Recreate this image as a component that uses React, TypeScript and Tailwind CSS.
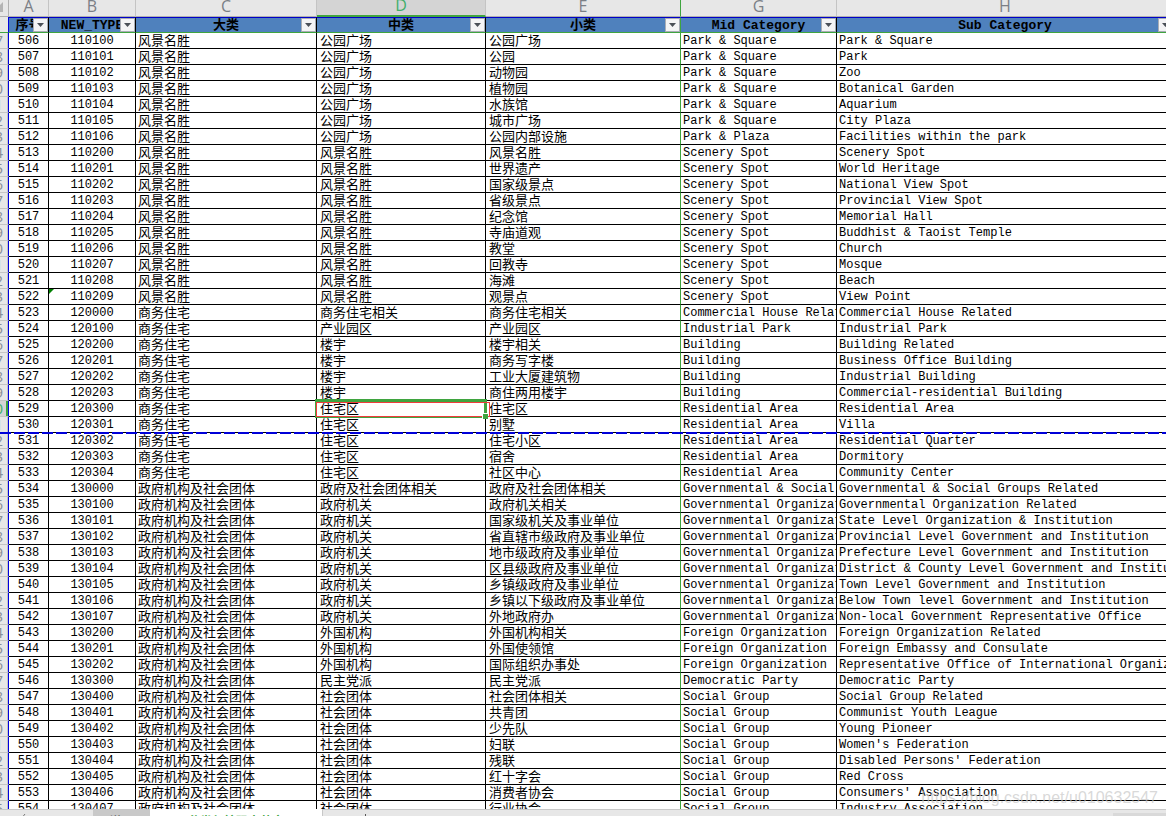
import clsx from 'clsx';

type Row = [no: number, type: number, big: string, mid: string, sub: string, midEn: string, subEn: string];

const SCENERY = '风景名胜';
const HOUSE = '商务住宅';
const GOV = '政府机构及社会团体';

const ROWS: Row[] = [
  [506, 110100, SCENERY, '公园广场', '公园广场', 'Park & Square', 'Park & Square'],
  [507, 110101, SCENERY, '公园广场', '公园', 'Park & Square', 'Park'],
  [508, 110102, SCENERY, '公园广场', '动物园', 'Park & Square', 'Zoo'],
  [509, 110103, SCENERY, '公园广场', '植物园', 'Park & Square', 'Botanical Garden'],
  [510, 110104, SCENERY, '公园广场', '水族馆', 'Park & Square', 'Aquarium'],
  [511, 110105, SCENERY, '公园广场', '城市广场', 'Park & Square', 'City Plaza'],
  [512, 110106, SCENERY, '公园广场', '公园内部设施', 'Park & Plaza', 'Facilities within the park'],
  [513, 110200, SCENERY, '风景名胜', '风景名胜', 'Scenery Spot', 'Scenery Spot'],
  [514, 110201, SCENERY, '风景名胜', '世界遗产', 'Scenery Spot', 'World Heritage'],
  [515, 110202, SCENERY, '风景名胜', '国家级景点', 'Scenery Spot', 'National View Spot'],
  [516, 110203, SCENERY, '风景名胜', '省级景点', 'Scenery Spot', 'Provincial View Spot'],
  [517, 110204, SCENERY, '风景名胜', '纪念馆', 'Scenery Spot', 'Memorial Hall'],
  [518, 110205, SCENERY, '风景名胜', '寺庙道观', 'Scenery Spot', 'Buddhist & Taoist Temple'],
  [519, 110206, SCENERY, '风景名胜', '教堂', 'Scenery Spot', 'Church'],
  [520, 110207, SCENERY, '风景名胜', '回教寺', 'Scenery Spot', 'Mosque'],
  [521, 110208, SCENERY, '风景名胜', '海滩', 'Scenery Spot', 'Beach'],
  [522, 110209, SCENERY, '风景名胜', '观景点', 'Scenery Spot', 'View Point'],
  [523, 120000, HOUSE, '商务住宅相关', '商务住宅相关', 'Commercial House Related', 'Commercial House Related'],
  [524, 120100, HOUSE, '产业园区', '产业园区', 'Industrial Park', 'Industrial Park'],
  [525, 120200, HOUSE, '楼宇', '楼宇相关', 'Building', 'Building Related'],
  [526, 120201, HOUSE, '楼宇', '商务写字楼', 'Building', 'Business Office Building'],
  [527, 120202, HOUSE, '楼宇', '工业大厦建筑物', 'Building', 'Industrial Building'],
  [528, 120203, HOUSE, '楼宇', '商住两用楼宇', 'Building', 'Commercial-residential Building'],
  [529, 120300, HOUSE, '住宅区', '住宅区', 'Residential Area', 'Residential Area'],
  [530, 120301, HOUSE, '住宅区', '别墅', 'Residential Area', 'Villa'],
  [531, 120302, HOUSE, '住宅区', '住宅小区', 'Residential Area', 'Residential Quarter'],
  [532, 120303, HOUSE, '住宅区', '宿舍', 'Residential Area', 'Dormitory'],
  [533, 120304, HOUSE, '住宅区', '社区中心', 'Residential Area', 'Community Center'],
  [534, 130000, GOV, '政府及社会团体相关', '政府及社会团体相关', 'Governmental & Social Groups', 'Governmental & Social Groups Related'],
  [535, 130100, GOV, '政府机关', '政府机关相关', 'Governmental Organization', 'Governmental Organization Related'],
  [536, 130101, GOV, '政府机关', '国家级机关及事业单位', 'Governmental Organization', 'State Level Organization & Institution'],
  [537, 130102, GOV, '政府机关', '省直辖市级政府及事业单位', 'Governmental Organization', 'Provincial Level Government and Institution'],
  [538, 130103, GOV, '政府机关', '地市级政府及事业单位', 'Governmental Organization', 'Prefecture Level Government and Institution'],
  [539, 130104, GOV, '政府机关', '区县级政府及事业单位', 'Governmental Organization', 'District & County Level Government and Institution'],
  [540, 130105, GOV, '政府机关', '乡镇级政府及事业单位', 'Governmental Organization', 'Town Level Government and Institution'],
  [541, 130106, GOV, '政府机关', '乡镇以下级政府及事业单位', 'Governmental Organization', 'Below Town level Government and Institution'],
  [542, 130107, GOV, '政府机关', '外地政府办', 'Governmental Organization', 'Non-local Government Representative Office'],
  [543, 130200, GOV, '外国机构', '外国机构相关', 'Foreign Organization', 'Foreign Organization Related'],
  [544, 130201, GOV, '外国机构', '外国使领馆', 'Foreign Organization', 'Foreign Embassy and Consulate'],
  [545, 130202, GOV, '外国机构', '国际组织办事处', 'Foreign Organization', 'Representative Office of International Organization'],
  [546, 130300, GOV, '民主党派', '民主党派', 'Democratic Party', 'Democratic Party'],
  [547, 130400, GOV, '社会团体', '社会团体相关', 'Social Group', 'Social Group Related'],
  [548, 130401, GOV, '社会团体', '共青团', 'Social Group', 'Communist Youth League'],
  [549, 130402, GOV, '社会团体', '少先队', 'Social Group', 'Young Pioneer'],
  [550, 130403, GOV, '社会团体', '妇联', 'Social Group', "Women's Federation"],
  [551, 130404, GOV, '社会团体', '残联', 'Social Group', "Disabled Persons' Federation"],
  [552, 130405, GOV, '社会团体', '红十字会', 'Social Group', 'Red Cross'],
  [553, 130406, GOV, '社会团体', '消费者协会', 'Social Group', "Consumers' Association"],
  [554, 130407, GOV, '社会团体', '行业协会', 'Social Group', 'Industry Association'],
];

const COLUMNS = [
  { letter: 'A', title: '序号', width: 'w-[40px]' },
  { letter: 'B', title: 'NEW_TYPE', width: 'w-[87px]' },
  { letter: 'C', title: '大类', width: 'w-[181px]' },
  { letter: 'D', title: '中类', width: 'w-[169px]' },
  { letter: 'E', title: '小类', width: 'w-[195px]' },
  { letter: 'G', title: 'Mid Category', width: 'w-[156px]' },
  { letter: 'H', title: 'Sub Category', width: '' },
];

const SELECTED_ROW = 529;
const PAGE_BREAK_ROW = 530;
const FLAGGED_ROW = 522;

const HEADING = "font-['Liberation_Mono','Noto_Sans_CJK_SC',monospace] text-[13px]";
const CJK = "font-['Liberation_Mono','Noto_Sans_CJK_SC',monospace] text-[13px]";
const LATIN = "font-['Liberation_Mono',monospace] text-[12px]";
const CELL = 'h-4 overflow-hidden border-r border-b p-0 pt-[2px] leading-[13px] whitespace-nowrap';

export default function App() {
  return (
    <div className="flex h-screen flex-col overflow-hidden bg-white text-black">
      <main className="min-h-0 flex-1 overflow-hidden">
        <table className="w-full min-w-[1174px] table-fixed border-separate border-spacing-0">
          <colgroup>
            <col className="w-[9px]" />
            {COLUMNS.map((column) => (
              <col key={column.letter} className={column.width} />
            ))}
          </colgroup>
          <thead>
            <LetterRow />
            <FilterRow />
          </thead>
          <tbody>
            {ROWS.map((row) => (
              <SheetRow key={row[0]} row={row} />
            ))}
          </tbody>
        </table>
      </main>
      <SheetTabs />
      <div
        aria-hidden
        className="pointer-events-none absolute right-2 bottom-2 font-['Liberation_Sans',sans-serif] text-[16px] leading-5 text-[#c8c8c8]/70"
      >
        https://blog.csdn.net/u010632547
      </div>
    </div>
  );
}

function LetterRow() {
  return (
    <tr className="bg-[#e7e7e7] font-['Open_Sans',sans-serif] text-[16px] text-[#7b7f86]">
      <th className="h-[17px] overflow-hidden border-r border-b border-[#b0b0b0] p-0">
        <svg viewBox="0 0 8 16" className="block h-4 w-2" aria-hidden>
          <path d="M3 2v10H0V5z" fill="#b4b4b4" />
        </svg>
      </th>
      {COLUMNS.map(({ letter }) => (
        <th
          key={letter}
          scope="col"
          className={clsx(
            'h-[17px] border-r p-0 font-normal',
            letter === 'D'
              ? 'border-b-2 border-b-[#3fa43f] bg-[#d4d4d4] text-[#3fae6a]'
              : 'border-b border-b-[#b0b0b0]',
            letter === 'E' ? 'border-r-[#3fa43f]' : 'border-r-[#c4c4c4]',
          )}
        >
          <div className="flex h-[15px] items-start justify-center leading-[10px]">{letter}</div>
        </th>
      ))}
    </tr>
  );
}

function FilterRow() {
  return (
    <tr>
      <th className="h-4 border-r border-b border-r-[#0000e0] border-b-[#3fa43f] bg-[#e7e7e7] p-0" />
      {COLUMNS.map(({ letter, title }) => (
        <th
          key={letter}
          scope="col"
          className={clsx(
            'h-4 overflow-hidden border-t border-r border-b border-t-[#0000c8] border-b-[#3fa43f] bg-[#4f81bd] p-0',
            letter === 'E' ? 'border-r-[#3fa43f]' : 'border-r-black',
          )}
        >
          <div className="relative flex h-[14px] items-end justify-center">
            <span className={clsx('leading-[13px] font-bold whitespace-nowrap', HEADING)}>{title}</span>
            <button
              type="button"
              aria-label={`Filter ${title}`}
              className="absolute top-0 right-0 flex h-[14px] w-[15px] items-center justify-center border border-[#a9adb5] bg-[#f3f3f5]"
            >
              <svg viewBox="0 0 7 4" className="h-1 w-[7px]" aria-hidden>
                <path d="M0 0h7L3.5 4z" fill="#4a4f57" />
              </svg>
            </button>
          </div>
        </th>
      ))}
    </tr>
  );
}

function SheetRow({ row }: { row: Row }) {
  const [no, type, big, mid, sub, midEn, subEn] = row;
  const selected = no === SELECTED_ROW;

  return (
    <tr>
      <th
        scope="row"
        className={clsx(
          'relative h-4 border-r border-b border-r-[#0000e0] border-b-[#c4c4c4] p-0 font-normal',
          selected ? 'bg-[#d4d4d4] text-[#3fae6a]' : 'bg-[#e7e7e7] text-[#8a8e95]',
        )}
      >
        <div
          className={clsx(
            "flex h-[15px] w-2 justify-end overflow-hidden font-['Open_Sans',sans-serif] text-[15px] leading-[15px]",
            selected ? 'border-r-2 border-[#3fa43f] pr-[3px]' : 'border-r border-[#c4c4c4] pr-1',
          )}
        >
          {(no + 1) % 10}
        </div>
        {no === PAGE_BREAK_ROW && <PageBreak />}
      </th>
      <td className={clsx(CELL, LATIN, 'border-black text-center')}>{no}</td>
      <td className={clsx(CELL, LATIN, 'relative border-black text-center')}>
        {no === FLAGGED_ROW && (
          <svg viewBox="0 0 5 5" className="absolute top-0 left-0 h-[5px] w-[5px]" aria-hidden>
            <path d="M0 0h5L0 5z" fill="#008000" />
          </svg>
        )}
        {type}
      </td>
      <td className={clsx(CELL, CJK, 'border-black pl-[2px]')}>{big}</td>
      {selected ? (
        <td className={clsx(CJK, 'relative h-4 border-r border-b border-black p-0 pt-[2px] pl-[3px] leading-[13px]')}>
          {mid}
          <Selection />
        </td>
      ) : (
        <td className={clsx(CELL, CJK, 'border-black pl-[3px]')}>{mid}</td>
      )}
      <td className={clsx(CELL, CJK, 'border-r-[#3fa43f] border-b-black pl-[3px]')}>{sub}</td>
      <td className={clsx(CELL, LATIN, 'border-black pl-[2px]')}>{midEn}</td>
      <td className={clsx(CELL, LATIN, 'border-black pl-[2px]')}>{subEn}</td>
    </tr>
  );
}

// dashed print boundary, drawn over the grid line below the row
function PageBreak() {
  return (
    <div className="pointer-events-none absolute -bottom-[2px] left-0 z-10 h-[2px] w-screen bg-[repeating-linear-gradient(90deg,#0000d8_0px,#0000d8_11px,transparent_11px,transparent_14px)]" />
  );
}

function Selection() {
  return (
    <div className="pointer-events-none absolute -inset-[2px] z-10 border-t-[3px] border-r-[3px] border-b border-l border-[#3fa43f]">
      <div className="absolute top-0 -right-[6px] bottom-0 left-0 border border-[#f03c3c]" />
      <div className="absolute -right-1 -bottom-[2px] h-[6px] w-[6px] border-t border-l border-white bg-[#3fa43f]" />
    </div>
  );
}

function SheetTabs() {
  return (
    <nav className="flex h-[7px] shrink-0 overflow-hidden bg-[#e7e7e7] font-['Noto_Sans_CJK_SC',sans-serif] text-[12px] leading-[14px]">
      <div className="flex h-5 w-[93px] border-t border-[#c8c8c8] pl-5">
        <svg viewBox="0 0 6 10" className="mt-1 h-[10px] w-[6px]" aria-hidden>
          <path d="M5 0L1 5l4 5" fill="none" stroke="#777" />
        </svg>
      </div>
      <button type="button" className="h-5 w-[57px] border-t border-[#c8c8c8] bg-[#c9c9c9] pt-[3px] text-[#555]">
        说明
      </button>
      <button type="button" className="h-5 w-[172px] bg-white pt-[3px] font-bold text-[#3fa43f]">
        分类与编码中英文
      </button>
      <div className="flex h-5 flex-1 justify-between border-t border-l border-[#c8c8c8]">
        <div className="mt-1 ml-[42px] h-3 w-px bg-[#555]" />
        <div className="mt-[3px] h-4 w-[53px] bg-[#d9d9d9]" />
      </div>
    </nav>
  );
}
